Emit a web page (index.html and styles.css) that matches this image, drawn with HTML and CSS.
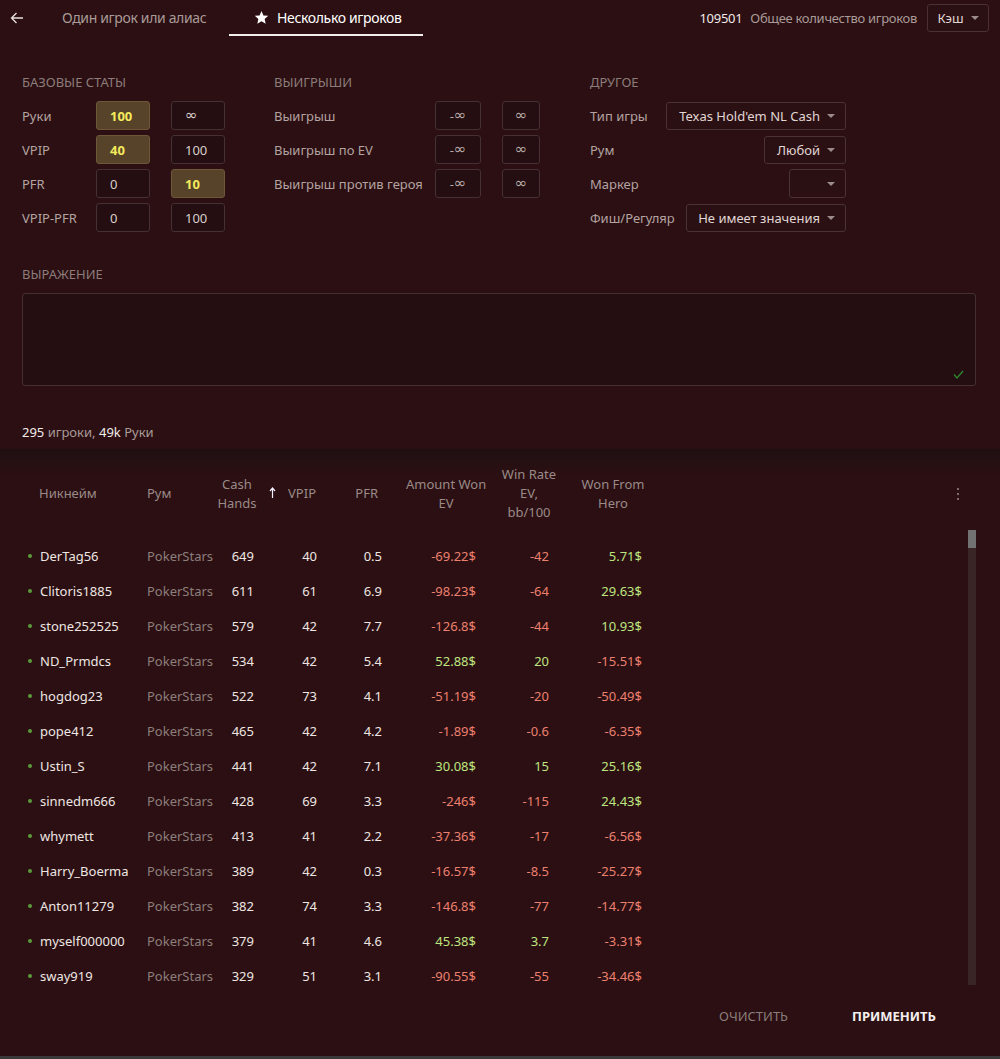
FILE: index.html
```html
<!DOCTYPE html>
<html lang="ru">
<head>
<meta charset="utf-8">
<title>Несколько игроков</title>
<link rel="stylesheet" href="styles.css">
</head>
<body>
<div class="app">
  <header class="topbar">
    <button class="back" aria-label="Назад">
      <svg width="14" height="12" viewBox="0 0 14 12"><path d="M13 6H1.5M6.5 1 1.5 6l5 5" fill="none" stroke="#e8e0dc" stroke-width="1.3"/></svg>
    </button>
    <nav class="tabs">
      <div class="tab">Один игрок или алиас</div>
      <div class="tab active">
        <svg class="star" width="15" height="15" viewBox="0 0 24 24"><path d="M12 1.5l3.1 7.1 7.7.7-5.8 5.1 1.7 7.6L12 18l-6.7 4 1.7-7.6L1.2 9.3l7.7-.7z" fill="#fff"/></svg>
        Несколько игроков
      </div>
    </nav>
    <div class="total">
      <span class="num">109501</span>
      <span class="muted">Общее количество игроков</span>
      <div class="select cash">Кэш <span class="caret"></span></div>
    </div>
  </header>

  <section class="filters">
    <div class="col col-base">
      <div class="col-title">БАЗОВЫЕ СТАТЫ</div>
      <div class="row"><span class="lbl">Руки</span><div class="inp hl">100</div><div class="inp"><span class="inf">∞</span></div></div>
      <div class="row"><span class="lbl">VPIP</span><div class="inp hl">40</div><div class="inp">100</div></div>
      <div class="row"><span class="lbl">PFR</span><div class="inp">0</div><div class="inp hl">10</div></div>
      <div class="row"><span class="lbl">VPIP-PFR</span><div class="inp">0</div><div class="inp">100</div></div>
    </div>
    <div class="col col-win">
      <div class="col-title">ВЫИГРЫШИ</div>
      <div class="row"><span class="lbl">Выигрыш</span><div class="inp a">-<span class="inf">∞</span></div><div class="inp b"><span class="inf">∞</span></div></div>
      <div class="row"><span class="lbl">Выигрыш по EV</span><div class="inp a">-<span class="inf">∞</span></div><div class="inp b"><span class="inf">∞</span></div></div>
      <div class="row"><span class="lbl">Выигрыш против героя</span><div class="inp a">-<span class="inf">∞</span></div><div class="inp b"><span class="inf">∞</span></div></div>
    </div>
    <div class="col col-other">
      <div class="col-title">ДРУГОЕ</div>
      <div class="row"><span class="lbl">Тип игры</span><div class="select w-type">Texas Hold'em NL Cash <span class="caret"></span></div></div>
      <div class="row"><span class="lbl">Рум</span><div class="select w-room">Любой <span class="caret"></span></div></div>
      <div class="row"><span class="lbl">Маркер</span><div class="select w-marker"><span class="caret"></span></div></div>
      <div class="row"><span class="lbl">Фиш/Регуляр</span><div class="select w-fish">Не имеет значения <span class="caret"></span></div></div>
    </div>
  </section>

  <section class="expr">
    <div class="col-title">ВЫРАЖЕНИЕ</div>
    <div class="textarea">
      <svg class="check" width="11" height="9" viewBox="0 0 11 9"><path d="M1 4.5 4 8 10 1" fill="none" stroke="#2e8b2e" stroke-width="1.2"/></svg>
    </div>
  </section>

  <div class="summary"><b>295</b> <span>игроки,</span> <b>49k</b> <span>Руки</span></div>

  <section class="results">
    <div class="thead">
      <div class="grid head">
        <div class="c-name">Никнейм</div>
        <div class="c-room">Рум</div>
        <div class="c-cash">Cash<br>Hands</div>
        <div class="c-sort"><svg width="7" height="11" viewBox="0 0 7 11"><path d="M3.5 11V1.5M1 4 3.5 1 6 4" fill="none" stroke="#f4f0ff" stroke-width="1.2"/></svg></div>
        <div class="c-vpip">VPIP</div>
        <div class="c-pfr">PFR</div>
        <div class="c-amt">Amount Won<br>EV</div>
        <div class="c-wr">Win Rate<br>EV,<br>bb/100</div>
        <div class="c-hero">Won From<br>Hero</div>
      </div>
      <div class="kebab"><i></i><i></i><i></i></div>
    </div>

    <div class="tbody">
      <div class="rows">
        <div class="grid row-d"><div class="c-name"><i class="dot"></i>DerTag56</div><div class="c-room">PokerStars</div><div class="c-cash">649</div><div class="c-sort"></div><div class="c-vpip">40</div><div class="c-pfr">0.5</div><div class="c-amt neg">-69.22$</div><div class="c-wr neg">-42</div><div class="c-hero pos">5.71$</div></div>
        <div class="grid row-d"><div class="c-name"><i class="dot"></i>Clitoris1885</div><div class="c-room">PokerStars</div><div class="c-cash">611</div><div class="c-sort"></div><div class="c-vpip">61</div><div class="c-pfr">6.9</div><div class="c-amt neg">-98.23$</div><div class="c-wr neg">-64</div><div class="c-hero pos">29.63$</div></div>
        <div class="grid row-d"><div class="c-name"><i class="dot"></i>stone252525</div><div class="c-room">PokerStars</div><div class="c-cash">579</div><div class="c-sort"></div><div class="c-vpip">42</div><div class="c-pfr">7.7</div><div class="c-amt neg">-126.8$</div><div class="c-wr neg">-44</div><div class="c-hero pos">10.93$</div></div>
        <div class="grid row-d"><div class="c-name"><i class="dot"></i>ND_Prmdcs</div><div class="c-room">PokerStars</div><div class="c-cash">534</div><div class="c-sort"></div><div class="c-vpip">42</div><div class="c-pfr">5.4</div><div class="c-amt pos">52.88$</div><div class="c-wr pos">20</div><div class="c-hero neg">-15.51$</div></div>
        <div class="grid row-d"><div class="c-name"><i class="dot"></i>hogdog23</div><div class="c-room">PokerStars</div><div class="c-cash">522</div><div class="c-sort"></div><div class="c-vpip">73</div><div class="c-pfr">4.1</div><div class="c-amt neg">-51.19$</div><div class="c-wr neg">-20</div><div class="c-hero neg">-50.49$</div></div>
        <div class="grid row-d"><div class="c-name"><i class="dot"></i>pope412</div><div class="c-room">PokerStars</div><div class="c-cash">465</div><div class="c-sort"></div><div class="c-vpip">42</div><div class="c-pfr">4.2</div><div class="c-amt neg">-1.89$</div><div class="c-wr neg">-0.6</div><div class="c-hero neg">-6.35$</div></div>
        <div class="grid row-d"><div class="c-name"><i class="dot"></i>Ustin_S</div><div class="c-room">PokerStars</div><div class="c-cash">441</div><div class="c-sort"></div><div class="c-vpip">42</div><div class="c-pfr">7.1</div><div class="c-amt pos">30.08$</div><div class="c-wr pos">15</div><div class="c-hero pos">25.16$</div></div>
        <div class="grid row-d"><div class="c-name"><i class="dot"></i>sinnedm666</div><div class="c-room">PokerStars</div><div class="c-cash">428</div><div class="c-sort"></div><div class="c-vpip">69</div><div class="c-pfr">3.3</div><div class="c-amt neg">-246$</div><div class="c-wr neg">-115</div><div class="c-hero pos">24.43$</div></div>
        <div class="grid row-d"><div class="c-name"><i class="dot"></i>whymett</div><div class="c-room">PokerStars</div><div class="c-cash">413</div><div class="c-sort"></div><div class="c-vpip">41</div><div class="c-pfr">2.2</div><div class="c-amt neg">-37.36$</div><div class="c-wr neg">-17</div><div class="c-hero neg">-6.56$</div></div>
        <div class="grid row-d"><div class="c-name"><i class="dot"></i>Harry_Boerma</div><div class="c-room">PokerStars</div><div class="c-cash">389</div><div class="c-sort"></div><div class="c-vpip">42</div><div class="c-pfr">0.3</div><div class="c-amt neg">-16.57$</div><div class="c-wr neg">-8.5</div><div class="c-hero neg">-25.27$</div></div>
        <div class="grid row-d"><div class="c-name"><i class="dot"></i>Anton11279</div><div class="c-room">PokerStars</div><div class="c-cash">382</div><div class="c-sort"></div><div class="c-vpip">74</div><div class="c-pfr">3.3</div><div class="c-amt neg">-146.8$</div><div class="c-wr neg">-77</div><div class="c-hero neg">-14.77$</div></div>
        <div class="grid row-d"><div class="c-name"><i class="dot"></i>myself000000</div><div class="c-room">PokerStars</div><div class="c-cash">379</div><div class="c-sort"></div><div class="c-vpip">41</div><div class="c-pfr">4.6</div><div class="c-amt pos">45.38$</div><div class="c-wr pos">3.7</div><div class="c-hero neg">-3.31$</div></div>
        <div class="grid row-d"><div class="c-name"><i class="dot"></i>sway919</div><div class="c-room">PokerStars</div><div class="c-cash">329</div><div class="c-sort"></div><div class="c-vpip">51</div><div class="c-pfr">3.1</div><div class="c-amt neg">-90.55$</div><div class="c-wr neg">-55</div><div class="c-hero neg">-34.46$</div></div>
      </div>
      <div class="scrollbar"><div class="thumb"></div></div>
    </div>

    <div class="actions">
      <button class="btn clear">ОЧИСТИТЬ</button>
      <button class="btn apply">ПРИМЕНИТЬ</button>
    </div>
  </section>
  <div class="bottom-line"></div>
</div>
</body>
</html>
```

FILE: styles.css
```css
* { box-sizing: border-box; }
html, body { margin: 0; padding: 0; }
body {
  background: #2b0f12;
  color: #e8e0dc;
  font-family: "Noto Sans", "Open Sans", sans-serif;
  font-size: 13px;
  width: 1000px;
  height: 1059px;
  overflow: hidden;
}
.app { display: flex; flex-direction: column; height: 1059px; }

/* top bar */
.topbar { display: flex; align-items: center; height: 36px; }
.back { background: none; border: 0; padding: 0; margin-left: 10px; width: 14px; height: 36px; display: flex; align-items: center; }
.tabs { display: flex; height: 36px; margin-left: 38px; }
.tab { display: flex; align-items: center; height: 36px; font-size: 14px; color: #a99b98; border-bottom: 2px solid transparent; padding-top: 1px; letter-spacing: -0.35px; }
.tab:first-child { width: 167px; }
.tab.active { width: 194px; color: #fff; border-bottom-color: #f2eeee; padding-left: 25px; gap: 8px; }
.total { margin-left: auto; display: flex; align-items: center; margin-right: 11px; }
.num { color: #f0eaea; letter-spacing: -0.3px; }
.muted { color: #a99b98; margin-left: 8px; letter-spacing: -0.3px; }
.select {
  display: flex; align-items: center; justify-content: flex-end; gap: 7px;
  height: 28px; border: 1px solid #4a3134; border-radius: 3px;
  background: #2a1013; padding: 0 10px 0 10px; color: #e0d6d3;
}
.cash { margin-left: 10px; width: 62px; height: 28px; justify-content: center; }
.caret { width: 0; height: 0; border-left: 4px solid transparent; border-right: 4px solid transparent; border-top: 4px solid #9b8c8a; display: inline-block; }

/* filters */
.filters { display: flex; padding: 37px 0 0 22px; }
.col-title { height: 18px; line-height: 18px; color: #8c7c7a; font-size: 13px; }
.col { display: flex; flex-direction: column; gap: 5px; }
.col .col-title { margin-bottom: 5px; }
.col-base { width: 252px; }
.col-win { width: 316px; }
.col-other { width: 256px; }
.row { display: flex; align-items: center; height: 29px; }
.lbl { color: #b3a3a1; }
.col-base .lbl { width: 74px; }
.col-win .lbl { width: 161px; }
.inp {
  height: 29px; width: 54px; border: 1px solid #453034; border-radius: 3px;
  background: #240e11; color: #d8cfcc; display: flex; align-items: center; padding-left: 13px;
}
.inf { font-family: "DejaVu Sans", sans-serif; font-size: 15px; line-height: 1; }
.col-base .inp + .inp { margin-left: 21px; }
.inp.hl { background: #574329; border-color: #6e5638; color: #f4ea5c; font-weight: 700; }
.inp.a { width: 46px; justify-content: center; padding: 0; color: #b8aaa7; }
.inp.b { width: 38px; margin-left: 21px; justify-content: center; padding: 0; color: #b8aaa7; }
.col-other .lbl { flex: 1; }
.w-type { width: 180px; }
.w-room { width: 82px; }
.w-marker { width: 57px; height: 29px; }
.w-fish { width: 160px; }

/* expression */
.expr { padding: 33px 24px 0 22px; }
.expr .col-title { margin-bottom: 10px; }
.textarea {
  height: 93px; border: 1px solid #46302f; border-radius: 3px; background: #240e11;
  display: flex; align-items: flex-end; justify-content: flex-end; padding: 0 11px 6px 0;
}
.summary { padding: 37px 0 0 22px; height: 63px; line-height: 18px; }
.summary b { font-weight: 400; color: #f2ecea; }
.summary span { color: #a99b98; }

/* results */
.results {
  flex: 1; display: flex; flex-direction: column;
  background: linear-gradient(#1f0f11 0, #251012 12px, #2b0f12 26px);
}
.thead { display: flex; padding-top: 16px; height: 81px; align-items: flex-start; }
.grid {
  display: grid;
  grid-template-columns: 121px 68px 44px 26px 35px 86px 80px 86px 82px;
  padding-left: 26px;
}
.head { color: #9a8a88; line-height: 19px; text-align: center; align-items: center; height: 57px; }
.head .c-name { text-align: left; padding-left: 13px; }
.head .c-room { text-align: left; }
.head .c-vpip { text-align: right; padding-right: 4px; }
.head .c-pfr { text-align: right; padding-right: 28px; }
.head .c-sort { display: flex; justify-content: center; padding-bottom: 2px; }
.head > div { white-space: nowrap; }
.kebab { margin-left: auto; margin-right: 41px; display: flex; flex-direction: column; gap: 3px; padding-top: 23px; }
.kebab i { width: 2px; height: 2px; background: #9a8a8c; border-radius: 50%; display: block; }

.tbody { display: flex; height: 455px; }
.rows { flex: 1; overflow: hidden; padding-top: 8px; }
.row-d { height: 35px; align-items: center; }
.row-d > div { text-align: right; white-space: nowrap; color: #eee6e2; }
.row-d .c-name { text-align: left; display: flex; align-items: center; }
.row-d .c-room { text-align: left; color: #8d7e7c; }
.dot { width: 4px; height: 4px; border-radius: 50%; background: #5c9a3c; margin: 0 8px 0 2px; display: inline-block; }
.row-d .c-cash { padding-right: 5px; }
.row-d .c-vpip { padding-right: 3px; }
.row-d .c-pfr { padding-right: 24px; }
.row-d .c-amt { padding-right: 10px; }
.row-d .c-wr { padding-right: 23px; }
.row-d .c-hero { padding-right: 12px; }
.row-d .neg { color: #ec806f; }
.row-d .pos { color: #bfe580; }
.scrollbar { width: 8px; margin-right: 24px; background: #3a2526; }
.thumb { height: 18px; background: #727272; }

.actions { display: flex; justify-content: flex-end; padding: 13px 46px 0 0; gap: 26px; }
.btn { background: none; border: 0; font-family: inherit; font-size: 13px; height: 36px; padding: 0 20px; }
.clear { color: #8a7c7a; }
.apply { color: #f4efee; font-weight: 700; padding: 0 0; width: 120px; }
.bottom-line { height: 3px; background: #3a3a3a; }
```
